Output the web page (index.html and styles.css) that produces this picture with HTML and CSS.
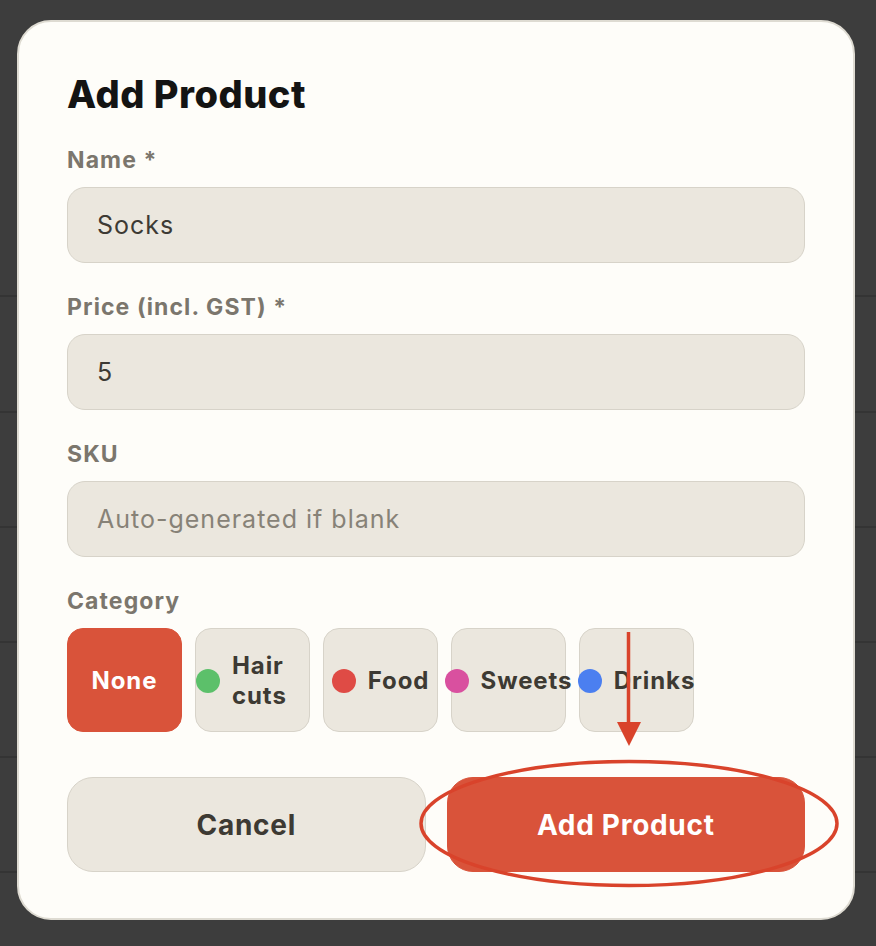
FILE: index.html
```html
<!DOCTYPE html>
<html lang="en">
<head>
<meta charset="utf-8">
<title>Add Product</title>
<link rel="stylesheet" href="styles.css">
</head>
<body>
<div class="modal">
  <h1 class="title">Add Product</h1>
  <div class="field">
    <label class="label">Name *</label>
    <div class="input">Socks</div>
  </div>
  <div class="field">
    <label class="label">Price (incl. GST) *</label>
    <div class="input">5</div>
  </div>
  <div class="field">
    <label class="label">SKU</label>
    <div class="input placeholder">Auto-generated if blank</div>
  </div>
  <div class="field">
    <label class="label">Category</label>
    <div class="chips">
      <div class="chip active"><span class="chip-text">None</span></div>
      <div class="chip"><span class="dot green"></span><span class="chip-text">Hair cuts</span></div>
      <div class="chip"><span class="dot red"></span><span class="chip-text">Food</span></div>
      <div class="chip"><span class="dot pink"></span><span class="chip-text">Sweets</span></div>
      <div class="chip"><span class="dot blue"></span><span class="chip-text">Drinks</span></div>
    </div>
  </div>
  <div class="actions">
    <button class="btn btn-cancel">Cancel</button>
    <button class="btn btn-primary">Add Product</button>
  </div>
</div>
<svg class="annotation" width="876" height="946" viewBox="0 0 876 946">
  <line x1="628.5" y1="632" x2="628.5" y2="728" stroke="#d9432b" stroke-width="3.5"/>
  <polygon points="617,722 641,722 629,746" fill="#d9432b"/>
  <ellipse cx="629" cy="823.5" rx="208" ry="62" fill="none" stroke="#d9432b" stroke-width="3.5"/>
</svg>
</body>
</html>
```
FILE: styles.css
```css
* { box-sizing: border-box; }
html, body { margin: 0; padding: 0; }
body {
  width: 876px;
  height: 946px;
  overflow: hidden;
  position: relative;
  font-family: Inter, "Noto Sans", "Liberation Sans", sans-serif;
  background-color: #3d3d3d;
  background-image: linear-gradient(to bottom,
    transparent 0 295px, #343434 295px 297px,
    transparent 297px 411px, #343434 411px 413px,
    transparent 413px 526px, #343434 526px 528px,
    transparent 528px 641px, #343434 641px 643px,
    transparent 643px 756px, #343434 756px 758px,
    transparent 758px 871px, #343434 871px 873px,
    transparent 873px);
  padding-top: 20px;
}
.modal {
  margin-left: 17px;
  width: 838px;
  height: 900px;
  background: #fefdf9;
  border: 2px solid #dedbd2;
  border-radius: 34px;
  padding: 50px 48px 0 48px;
  display: flex;
  flex-direction: column;
}
.title {
  margin: 0 0 30px 0;
  font-size: 38px;
  line-height: 44px;
  font-weight: 800;
  color: #141413;
  letter-spacing: 0.5px;
}
.field {
  display: flex;
  flex-direction: column;
  gap: 13px;
  margin-bottom: 30px;
}
.label {
  font-size: 23px;
  line-height: 28px;
  font-weight: 700;
  color: #7b766d;
  letter-spacing: 1.1px;
}
.input {
  height: 76px;
  border: 1.5px solid #d7d3c9;
  border-radius: 18px;
  background: #ebe7de;
  padding: 0 29px;
  display: flex;
  align-items: center;
  font-size: 25px;
  letter-spacing: 1px;
  color: #3d3a34;
}
.input.placeholder { color: #878277; }
.chips {
  display: flex;
  gap: 13px;
}
.chip {
  width: 115px;
  flex: 0 0 115px;
  border: 1.5px solid #d7d3c9;
  border-radius: 16px;
  background: #ebe7de;
  padding: 22px 0 20px;
  display: flex;
  align-items: center;
  justify-content: center;
  gap: 12px;
  font-size: 24px;
  line-height: 30px;
  font-weight: 700;
  letter-spacing: 0.9px;
  color: #3d3a33;
}
.chip.active {
  background: #d9533a;
  border-color: #d9533a;
  color: #ffffff;
}
.dot {
  width: 24px;
  height: 24px;
  border-radius: 50%;
  flex: 0 0 24px;
}
.dot.green { background: #5cc06a; }
.dot.red { background: #df4b45; }
.dot.pink { background: #d9509f; }
.dot.blue { background: #4b7ff0; }
.actions {
  display: flex;
  gap: 21px;
  margin-top: 15px;
}
.btn {
  flex: 1 1 0;
  height: 95px;
  border-radius: 26px;
  font-family: inherit;
  font-size: 28px;
  font-weight: 700;
  letter-spacing: 0.7px;
  cursor: pointer;
}
.btn-cancel {
  background: #ebe7de;
  border: 1.5px solid #d7d3c9;
  color: #3d3a33;
}
.btn-primary {
  background: #d9533a;
  border: 1.5px solid #d9533a;
  color: #ffffff;
}
.annotation {
  position: absolute;
  top: 0;
  left: 0;
  pointer-events: none;
}
```
